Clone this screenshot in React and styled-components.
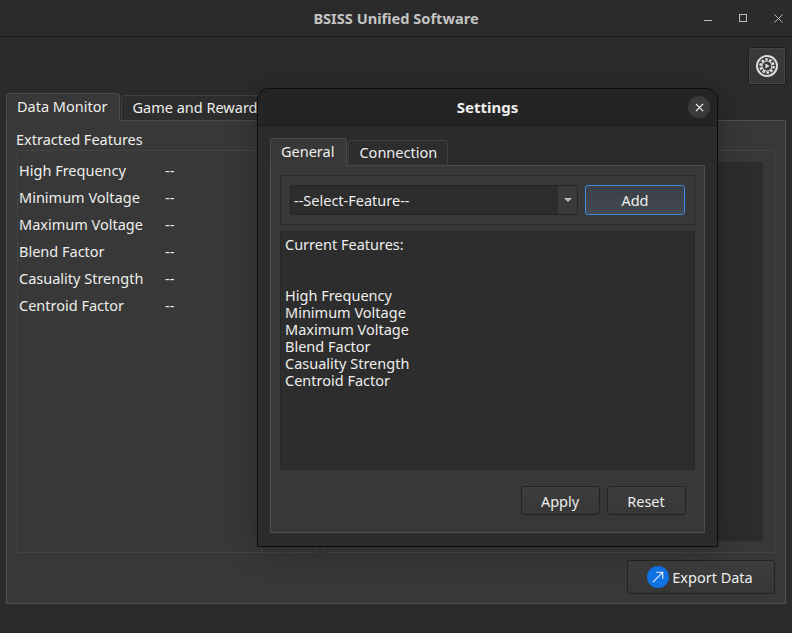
import styled, { createGlobalStyle } from "styled-components";

const Global = createGlobalStyle`
  html, body { margin: 0; padding: 0; background: #2b2b2b; }
  body { font-family: "Noto Sans", "Open Sans", sans-serif; font-size: 14.5px; color: #eeeeec; }
`;

const Win = styled.div`
  position: relative;
  width: 792px;
  height: 633px;
  overflow: hidden;
  background: #2b2b2b;
  display: flex;
  flex-direction: column;
`;

const TitleBar = styled.div`
  height: 36px;
  flex: none;
  border-bottom: 1px solid #1b1b1b;
  display: flex;
  align-items: center;
  justify-content: center;
  position: relative;
  font-weight: 700;
  font-size: 14.6px;
  color: #c4c4c4;
`;

const WinControls = styled.div`
  position: absolute;
  right: 9px;
  top: 14px;
  display: flex;
  gap: 26px;
  svg { display: block; }
`;

const Toolbar = styled.div`
  height: 57px;
  flex: none;
  display: flex;
  justify-content: flex-end;
  padding: 10px 6px 0 0;
  box-sizing: border-box;
`;

const GearButton = styled.button`
  width: 38px;
  height: 38px;
  padding: 0;
  background: linear-gradient(#3a3a3a, #363636);
  border: 1px solid #1e1e1e;
  outline: 1px solid #454545;
  outline-offset: -2px;
  border-radius: 3px;
  display: flex;
  align-items: center;
  justify-content: center;
`;

const TabRow = styled.div`
  display: flex;
  align-items: flex-end;
  height: 27px;
  flex: none;
  position: relative;
  z-index: 1;
  margin-bottom: -1px;
`;

const Tab = styled.div`
  box-sizing: border-box;
  height: ${(p) => (p.$active ? "28px" : "26px")};
  padding: 0 ${(p) => (p.$active ? 12 : 10)}px 3px 10px;
  display: flex;
  align-items: center;
  white-space: nowrap;
  background: ${(p) => (p.$active ? "#383838" : "#2d2d2d")};
  border: 1px solid ${(p) => (p.$active ? "#4a4a4a" : "#3f3f3f")};
  border-bottom: ${(p) => (p.$active ? "none" : "1px solid #4a4a4a")};
  border-radius: 3px 3px 0 0;
  margin-right: 1px;
  color: #eeeeec;
`;

const MainTabs = styled.div`
  margin: 0 6px;
  display: flex;
  flex-direction: column;
  height: 510px;
`;

const Pane = styled.div`
  flex: 1;
  background: #383838;
  border: 1px solid #4f4f4f;
  box-sizing: border-box;
  padding: 8px 10px 8px;
  display: flex;
  flex-direction: column;
`;

const Columns = styled.div`
  display: flex;
  gap: 7px;
  height: 424px;
  flex: none;
`;

const LeftCol = styled.div`
  width: 300px;
  flex: none;
  display: flex;
  flex-direction: column;
`;

const RightCol = styled.div`
  flex: 1;
  display: flex;
  flex-direction: column;
`;

const GroupTitle = styled.div`
  height: 21px;
  line-height: 20px;
  margin-left: -1px;
  flex: none;
  color: #eeeeec;
`;

const Group = styled.div`
  flex: 1;
  border: 1px solid #444444;
  padding: 7px 0 0 1px;
`;

const RightGroup = styled(Group)`
  padding: 10px 10px 10px 0;
  display: flex;
  justify-content: flex-end;
`;

const DarkBox = styled.div`
  width: 100%;
  background: #2c2c2c;
  border: 1px solid #363636;
`;

const FeatureRow = styled.div`
  display: grid;
  grid-template-columns: 146px 1fr;
  height: 27px;
  line-height: 24px;
  color: #eeeeec;
`;

const Footer = styled.div`
  display: flex;
  justify-content: flex-end;
  padding-top: 7px;
`;

const ExportButton = styled.button`
  width: 148px;
  height: 34px;
  background: linear-gradient(#3d3d3d, #373737);
  border: 1px solid #222222;
  border-radius: 3px;
  color: #eeeeec;
  font: inherit;
  display: flex;
  align-items: center;
  justify-content: center;
  gap: 3px;
  padding: 0 2px 0 0;
`;

const Dialog = styled.div`
  position: absolute;
  z-index: 2;
  left: 257px;
  top: 88px;
  width: 461px;
  height: 459px;
  box-sizing: border-box;
  background: #2b2b2b;
  border: 1px solid #0c0c0c;
  border-radius: 12px 12px 0 0;
  box-shadow: 0 4px 28px rgba(0, 0, 0, 0.28);
  display: flex;
  flex-direction: column;
`;

const DialogHead = styled.div`
  height: 37px;
  box-sizing: border-box;
  flex: none;
  background: #242424;
  border-bottom: 1px solid #1a1a1a;
  border-radius: 11px 11px 0 0;
  display: flex;
  align-items: center;
  justify-content: center;
  position: relative;
  font-weight: 700;
  font-size: 15px;
  color: #eeeeec;
`;

const CloseDot = styled.div`
  position: absolute;
  right: 7px;
  top: 7px;
  width: 22px;
  height: 22px;
  border-radius: 50%;
  background: #3a3a3a;
  display: flex;
  align-items: center;
  justify-content: center;
`;

const DialogBody = styled.div`
  flex: 1;
  padding: 13px 12px 13px;
  display: flex;
  flex-direction: column;
`;

const DialogPane = styled(Pane)`
  padding: 9px 9px 0;
  gap: 6px;
`;

const SelectBar = styled.div`
  height: 50px;
  flex: none;
  box-sizing: border-box;
  border: 1px solid #2a2a2a;
  display: flex;
  align-items: center;
  padding: 0 9px;
  gap: 7px;
`;

const Combo = styled.div`
  flex: 1;
  height: 30px;
  box-sizing: border-box;
  display: flex;
  background: #2d2d2d;
  border: 1px solid #252525;
  border-radius: 3px;
`;

const ComboText = styled.div`
  flex: 1;
  line-height: 28px;
  padding-left: 3px;
`;

const ComboArrow = styled.div`
  width: 19px;
  background: #3a3a3a;
  display: flex;
  align-items: center;
  justify-content: center;
  border-radius: 0 2px 2px 0;
`;

const AddButton = styled.button`
  width: 100px;
  height: 30px;
  background: linear-gradient(#3b4048, #454a52);
  border: 1px solid #3f8ae2;
  border-radius: 3px;
  color: #eeeeec;
  font: inherit;
  padding: 0;
`;

const TextPanel = styled.div`
  height: 239px;
  flex: none;
  box-sizing: border-box;
  background: #2d2d2d;
  border: 1px solid #262626;
  padding: 4px 4px;
  line-height: 17px;
`;

const Spacer = styled.div`
  height: 34px;
`;

const ActionRow = styled.div`
  display: flex;
  justify-content: flex-end;
  gap: 7px;
  padding: 10px 9px 0 0;
`;

const ActionButton = styled.button`
  width: 79px;
  height: 29px;
  background: linear-gradient(#3d3d3d, #373737);
  border: 1px solid #222222;
  border-radius: 3px;
  color: #eeeeec;
  font: inherit;
  padding: 0 1px 0 0;
`;

const features = [
  "High Frequency",
  "Minimum Voltage",
  "Maximum Voltage",
  "Blend Factor",
  "Casuality Strength",
  "Centroid Factor",
];

const Gear = () => (
  <svg width="24" height="24" viewBox="0 0 24 24" fill="none" stroke="#dcdcdc">
    <circle cx="12" cy="12" r="10" strokeWidth="2" />
    <circle cx="12" cy="12" r="6.6" strokeWidth="2.4" strokeDasharray="2.6 1.55" />
    <circle cx="12" cy="12" r="5" strokeWidth="1.1" />
    <path d="M10.4 9.4v5.2l4.2-2.6z" fill="#dcdcdc" stroke="none" />
  </svg>
);

export default function App() {
  return (
    <Win>
      <Global />
      <TitleBar>
        BSISS Unified Software
        <WinControls>
          <svg width="9" height="9" viewBox="0 0 9 9" stroke="#bdbdbd" strokeWidth="1">
            <path d="M0 6.5h8" />
          </svg>
          <svg width="9" height="9" viewBox="0 0 9 9" fill="none" stroke="#bdbdbd" strokeWidth="1">
            <rect x="0.5" y="0.5" width="7" height="7" />
          </svg>
          <svg width="9" height="9" viewBox="0 0 9 9" stroke="#bdbdbd" strokeWidth="1">
            <path d="M0.5 0.5l8 8M8.5 0.5l-8 8" />
          </svg>
        </WinControls>
      </TitleBar>
      <Toolbar>
        <GearButton>
          <Gear />
        </GearButton>
      </Toolbar>
      <MainTabs>
        <TabRow>
          <Tab $active>Data Monitor</Tab>
          <Tab>Game and Reward</Tab>
        </TabRow>
        <Pane>
          <Columns>
            <LeftCol>
              <GroupTitle>Extracted Features</GroupTitle>
              <Group>
                {features.map((f) => (
                  <FeatureRow key={f}>
                    <span>{f}</span>
                    <span>--</span>
                  </FeatureRow>
                ))}
              </Group>
            </LeftCol>
            <RightCol>
              <GroupTitle />
              <RightGroup>
                <DarkBox />
              </RightGroup>
            </RightCol>
          </Columns>
          <Footer>
            <ExportButton>
              <svg width="22" height="22" viewBox="0 0 24 24">
                <circle cx="12" cy="12" r="12" fill="#0f72e5" />
                <path d="M6.5 17.5L17 7M10 6.8h7.2V14" fill="none" stroke="#f4f8ff" strokeWidth="1.2" />
              </svg>
              Export Data
            </ExportButton>
          </Footer>
        </Pane>
      </MainTabs>
      <Dialog>
        <DialogHead>
          Settings
          <CloseDot>
            <svg width="9" height="9" viewBox="0 0 10 10" stroke="#f0f0f0" strokeWidth="1.4">
              <path d="M1 1l8 8M9 1l-8 8" />
            </svg>
          </CloseDot>
        </DialogHead>
        <DialogBody>
          <TabRow>
            <Tab $active>General</Tab>
            <Tab>Connection</Tab>
          </TabRow>
          <DialogPane>
            <SelectBar>
              <Combo>
                <ComboText>--Select-Feature--</ComboText>
                <ComboArrow>
                  <svg width="8" height="4" viewBox="0 0 8 4">
                    <path d="M0 0h8L4 4z" fill="#bdbdbd" />
                  </svg>
                </ComboArrow>
              </Combo>
              <AddButton>Add</AddButton>
            </SelectBar>
            <TextPanel>
              Current Features:
              <Spacer />
              {features.map((f) => (
                <div key={f}>{f}</div>
              ))}
            </TextPanel>
            <ActionRow>
              <ActionButton>Apply</ActionButton>
              <ActionButton>Reset</ActionButton>
            </ActionRow>
          </DialogPane>
        </DialogBody>
      </Dialog>
    </Win>
  );
}
